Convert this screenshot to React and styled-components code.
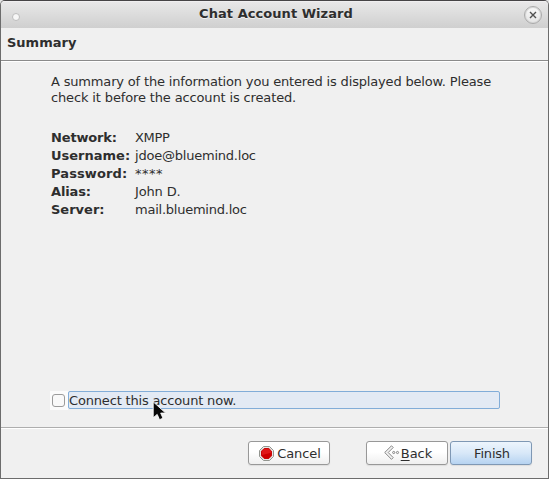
import React from "react";
import styled, { createGlobalStyle } from "styled-components";

const GlobalStyle = createGlobalStyle`
  * { box-sizing: border-box; }
  body { margin: 0; background: #e4e4e4; overflow: hidden; }
`;

const Window = styled.main`
  position: relative;
  display: flex;
  flex-direction: column;
  width: 549px;
  height: 479px;
  border: 1px solid #6c6c6c;
  border-top-color: #464446;
  border-radius: 5px 5px 0 0;
  background: #f0f0f0;
  color: #2e2e2e;
  font: 13px "DejaVu Sans", sans-serif;
  white-space: nowrap;
  overflow: hidden;
`;

const TitleBar = styled.header`
  display: grid;
  grid-template-columns: 30px 1fr 30px;
  align-items: center;
  flex: 0 0 27px;
  background: linear-gradient(#e9e8e9, #e1e1e1 30%, #cfcfcf);
  box-shadow: inset 0 1px #f0eff0;
`;

const Title = styled.h1`
  margin: 0 0 2px 3px;
  text-align: center;
  font-size: 13px;
  line-height: 16px;
  letter-spacing: ${(p) => p.$spacing || "0"};
  text-shadow: 0 1px #f1f1f1;
`;

const MenuDot = styled.span`
  width: 8px;
  height: 8px;
  margin: 5px 0 0 11px;
  border: 1px solid #bdbdbd;
  border-radius: 50%;
  background: #f7f7f7;
`;

const CloseButton = styled.button`
  display: grid;
  place-items: center;
  width: 18px;
  height: 18px;
  margin: 0 0 0 6px;
  padding: 0;
  border: 1px solid #aaa;
  border-radius: 50%;
  background: linear-gradient(#f8f8f8, #e5e5e5);
  box-shadow: inset 0 0 0 1px #d8d8d8;
`;

const Heading = styled.h2`
  flex: 0 0 34px;
  margin: 0;
  padding: 6px 6px 0;
  border-bottom: 1px solid #fff;
  box-shadow: inset 0 -1px #8b8b8b;
  font-size: 13px;
  line-height: 18px;
`;

const Content = styled.section`
  display: flex;
  flex-direction: column;
  flex: 1;
  padding: 12px 48px 17px 50px;
`;

const Intro = styled.p`
  margin: 0;
  line-height: 16px;
`;

const Line = styled.span`
  display: block;
  letter-spacing: ${(p) => p.$spacing || "0"};
`;

const Details = styled.dl`
  display: grid;
  grid-template-columns: 84px 1fr;
  grid-auto-rows: 18px;
  margin: 23px 0 0;
  line-height: 18px;
`;

const Label = styled.dt`
  font-weight: bold;
  letter-spacing: ${(p) => p.$spacing || "0"};
`;

const Value = styled.dd`
  margin: 0;
  letter-spacing: ${(p) => p.$spacing || "0"};
`;

const CheckRow = styled.label`
  display: flex;
  height: 19px;
  margin: auto 0 0 -1px;
`;

const CheckArea = styled.span`
  display: flex;
  align-items: center;
  width: 18px;
  padding-left: 2px;
  background: #fbfbfb;
`;

const Checkbox = styled.input`
  appearance: none;
  width: 13px;
  height: 13px;
  margin: 0;
  border: 1px solid #9b9b9b;
  border-radius: 3px;
  background: #f9f9f9;
`;

const CheckLabel = styled.span`
  flex: 1;
  height: 18px;
  border: 1px solid #82add8;
  border-radius: 2px;
  background: #e3eaf4;
  line-height: 17px;
  letter-spacing: ${(p) => p.$spacing || "0"};
`;

const Footer = styled.footer`
  display: flex;
  flex: 0 0 51px;
  justify-content: flex-end;
  padding: 13px 16px 0 0;
  border-top: 1px solid #aeaeae;
  box-shadow: inset 0 1px #fff;
`;

const Button = styled.button`
  display: flex;
  align-items: center;
  justify-content: center;
  gap: ${(p) => p.$gap || "0"};
  width: 82px;
  height: 24px;
  margin-left: ${(p) => p.$offset || "0"};
  padding: 0 0 0 2px;
  border: 1px solid ${(p) => (p.$primary ? "#7f98b4" : "#989898")};
  border-radius: 3px;
  background: ${(p) => p.$primary
    ? "linear-gradient(#edf5fd, #d8e8f8 50%, #b6d3f1)"
    : "linear-gradient(#fff 45%, #efefef)"};
  box-shadow: 0 1px 1px #ddd;
  color: inherit;
  font: inherit;
  letter-spacing: ${(p) => p.$spacing || "0"};
`;

const AccessKey = styled.span`
  text-decoration: underline;
  text-underline-offset: 2px;
`;

const Pointer = styled.svg`
  position: absolute;
  left: 151px;
  top: 400px;
`;

const CloseIcon = () => (
  <svg width="8" height="8" viewBox="0 0 8 8">
    <path d="M1 1L7 7M7 1L1 7" stroke="#505050" strokeWidth="1.4" />
  </svg>
);

const StopIcon = () => (
  <svg width="15" height="15" viewBox="0 0 15 15">
    <path d="M4.5.5h6l4 4v6l-4 4h-6l-4-4v-6Z" fill="#e8e8e6" stroke="#92958f" />
    <path d="M5.2 2.5h4.6l2.7 2.7v4.6l-2.7 2.7H5.2L2.5 9.8V5.2Z" fill="#ce0000" stroke="#c80808" />
    <path d="M5.3 3h4.4L12 5.3v1.5L3 9V5.3Z" fill="#e01818" />
  </svg>
);

const BackIcon = () => (
  <svg width="16" height="16" viewBox="0 0 16 16" fill="#f3f3f3" stroke="#858585">
    <path d="M7.5.8L.7 7.5l6.8 6.8 1.7-1.7-5-5.1 5-5Z" />
    <circle cx="9.7" cy="7.5" r="1.1" />
    <circle cx="13.5" cy="7.5" r="1.1" />
  </svg>
);

export default function App() {
  return (
    <>
      <GlobalStyle />
      <Window>
        <TitleBar>
          <MenuDot />
          <Title $spacing=".05px">Chat Account Wizard</Title>
          <CloseButton aria-label="Close"><CloseIcon /></CloseButton>
        </TitleBar>
        <Heading>Summary</Heading>
        <Content>
          <Intro>
            <Line $spacing="-.17px">A summary of the information you entered is displayed below. Please</Line>
            <Line $spacing="-.14px">check it before the account is created.</Line>
          </Intro>
          <Details>
            <Label $spacing="-.15px">Network:</Label><Value $spacing="-.3px">XMPP</Value>
            <Label>Username:</Label><Value $spacing="-.22px">jdoe@bluemind.loc</Value>
            <Label $spacing=".1px">Password:</Label><Value $spacing=".5px">****</Value>
            <Label $spacing="-.15px">Alias:</Label><Value $spacing="-.15px">John D.</Value>
            <Label>Server:</Label><Value $spacing="-.24px">mail.bluemind.loc</Value>
          </Details>
          <CheckRow>
            <CheckArea><Checkbox type="checkbox" /></CheckArea>
            <CheckLabel $spacing="-.17px">Connect this account now.</CheckLabel>
          </CheckRow>
        </Content>
        <Footer>
          <Button $gap="3px" $spacing="-.1px"><StopIcon />Cancel</Button>
          <Button $gap="1px" $offset="36px"><BackIcon /><span><AccessKey>B</AccessKey>ack</span></Button>
          <Button $primary $offset="2px" $spacing="-.2px">Finish</Button>
        </Footer>
        <Pointer width="14" height="20" viewBox="0 0 14 20">
          <path d="M1.2.8v16l4-3.4 2.3 5.3 3.5-1.5-2.3-5.1h5Z" fill="#080808" stroke="#fff" strokeWidth=".9" />
        </Pointer>
      </Window>
    </>
  );
}
